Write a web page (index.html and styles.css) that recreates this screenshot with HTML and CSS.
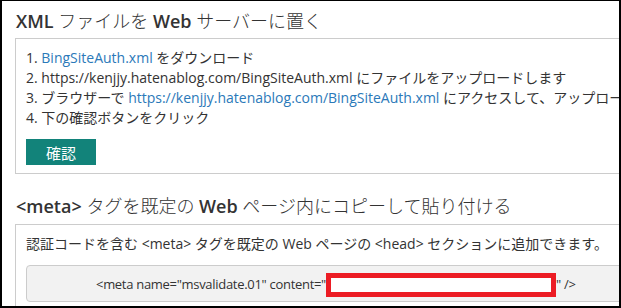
FILE: index.html
```html
<!DOCTYPE html>
<html>
  <head>
    <title>Bing site verify</title>
    <link rel="stylesheet" href="styles.css">
  </head>

  <body>
    <div class="frame">
      <h2 class="title"><b>XML</b> ファイルを <b>Web</b> サーバーに置く</h2>
      <div class="panel steps">
        <div class="line">1. <a href="#">BingSiteAuth.xml</a> をダウンロード</div>
        <div class="line">2. https://kenjjy.hatenablog.com/BingSiteAuth.xml にファイルをアップロードします</div>
        <div class="line">3. ブラウザーで <a href="#">https://kenjjy.hatenablog.com/BingSiteAuth.xml</a> にアクセスして、アップロード</div>
        <div class="line">4. 下の確認ボタンをクリック</div>
        <button class="btn">確認</button>
      </div>

      <h2 class="title second"><b>&lt;meta&gt;</b> タグを既定の <b>Web</b> ページ内にコピーして貼り付ける</h2>
      <div class="panel">
        <div class="line">認証コードを含む &lt;meta&gt; タグを既定の Web ページの &lt;head&gt; セクションに追加できます。</div>
        <div class="code">
          &lt;meta name="msvalidate.01" content="<span class="hidden"></span>" /&gt;
        </div>
      </div>
    </div>
  </body>
</html>
```

FILE: styles.css
```css
/* page frame */
body {
  margin: 0;
  background-color: #fff;
  font-family: "Open Sans", "Noto Sans CJK JP", sans-serif;
  color: #333;
}

.frame {
  width: 621px;
  height: 308px;
  box-sizing: border-box;
  border: 2px solid #000;
  border-top-width: 1px;
  overflow: hidden;
  white-space: nowrap;
}

/* headings */
.title {
  margin: 0;
  padding: 7px 0 0 14px;
  height: 30px;
  font-size: 18px;
  line-height: 26px;
  font-weight: 300;
  color: #333;
}

.title b {
  font-weight: 600;
}

.title.second {
  height: 50px;
  padding-top: 19px;
  box-sizing: border-box;
}

/* boxes */
.panel {
  margin-left: 13px;
  margin-right: -40px;
  border: 1px solid #ccc;
  padding: 9px 10px 9px 10px;
}

.steps {
  padding-bottom: 8px;
}

.line {
  font-size: 14px;
  line-height: 20px;
  color: #333;
}

.line a {
  color: #2b79b9;
  text-decoration: none;
}

.btn {
  display: block;
  margin-top: 11px;
  width: 70px;
  height: 26px;
  border: none;
  background-color: #12837a;
  color: #fff;
  font-family: "Noto Sans CJK JP", sans-serif;
  font-size: 15px;
  padding: 0;
}

.code {
  margin-top: 11px;
  height: 37px;
  box-sizing: border-box;
  border: 1px solid #ccc;
  border-radius: 4px;
  background-color: #f2f2f2;
  padding-left: 69px;
  font-size: 13px;
  letter-spacing: -0.3px;
  line-height: 37px;
  color: #333;
}

.hidden {
  display: inline-block;
  vertical-align: middle;
  width: 220px;
  height: 14px;
  border: 5px solid #ec1c24;
  background-color: #fff;
  margin-top: -2px;
}
```
